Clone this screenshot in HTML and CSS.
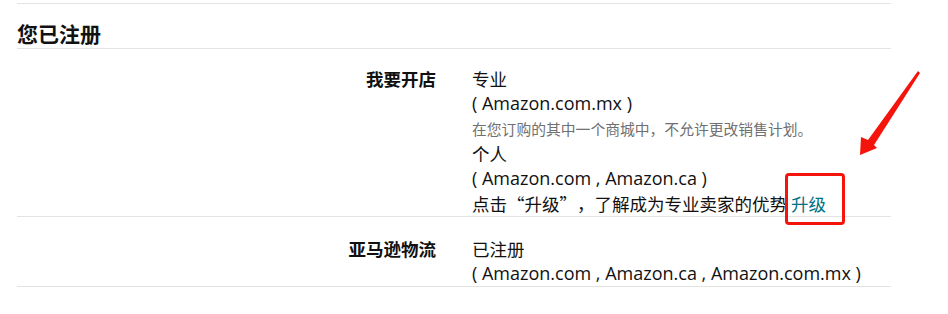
FILE: index.html
```html
<!DOCTYPE html>
<html lang="zh-CN">
<head>
    <meta charset="UTF-8">
    <title>您已注册</title>
    <link rel="stylesheet" href="styles.css">
</head>
<body>
    <div class="panel">
        <!-- cabecera -->
        <h2 class="titulo">您已注册</h2>

        <div class="fila">
            <div class="etiqueta">我要开店</div>
            <div class="valor">
                <div>专业</div>
                <div class="mercado">( Amazon.com.mx )</div>
                <div class="nota">在您订购的其中一个商城中，不允许更改销售计划。</div>
                <div>个人</div>
                <div class="mercado">( Amazon.com , Amazon.ca )</div>
                <div>点击“升级”，了解成为专业卖家的优势 <a href="#" class="enlace">升级<span class="marco"></span></a></div>
            </div>
        </div>

        <div class="fila">
            <div class="etiqueta">亚马逊物流</div>
            <div class="valor">
                <div>已注册</div>
                <div class="mercado">( Amazon.com , Amazon.ca , Amazon.com.mx )</div>
            </div>
        </div>
    </div>

    <!-- flecha roja de la captura -->
    <svg class="flecha" width="948" height="314" viewBox="0 0 948 314">
        <polygon points="860,155 861,137 868,140 918,71 920,73 874,145 877,148" fill="#f5140c"/>
    </svg>
</body>
</html>
```

FILE: styles.css
```css
body {
    margin: 0;
    font-family: "Noto Sans CJK SC", sans-serif;
    color: #111;
    background: #fff;
    text-spacing-trim: space-all;
}
.panel {
    width: 874px;
    margin: 3px 0 0 17px;
    border-top: 1px solid #e3e3e3;
}
.titulo {
    margin: 0;
    padding-top: 14px;
    font-size: 21px;
    line-height: 30px;
    font-weight: bold;
    border-bottom: 1px solid #e3e3e3;
}
.fila {
    display: grid;
    grid-template-columns: 419px 1fr;
    column-gap: 36px;
    padding-top: 17px;
    border-bottom: 1px solid #e3e3e3;
    font-size: 17.5px;
    line-height: 25px;
}
.fila + .fila {
    padding-top: 19px;
}
.etiqueta {
    text-align: right;
    font-weight: bold;
}
.mercado {
    font-family: "Open Sans", "Noto Sans CJK SC", sans-serif;
    font-size: 18px;
}
.nota {
    font-size: 14.8px;
    color: #707070;
}
.enlace {
    position: relative;
    color: #007185;
    text-decoration: none;
}
.marco {
    position: absolute;
    left: -6px;
    top: -18px;
    width: 54px;
    height: 46px;
    border: 3px solid #f5140c;
    border-radius: 4px;
}
.flecha {
    position: absolute;
    left: 0;
    top: 0;
    pointer-events: none;
}
```
